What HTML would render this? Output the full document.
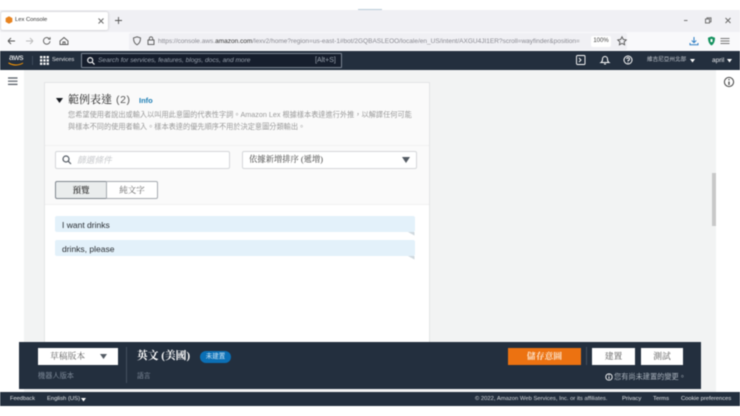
<!DOCTYPE html>
<html lang="zh-Hant">
<head>
<meta charset="utf-8">
<title>Lex Console</title>
<style>
html,body{margin:0;padding:0;width:740px;height:416px;overflow:hidden;background:#fff}
body{position:relative;font-family:"Liberation Sans","Noto Sans CJK TC",sans-serif;color:#16191f}
.a{position:absolute;box-sizing:border-box;white-space:nowrap}
svg{position:absolute;overflow:visible}
#w{position:absolute;left:0;top:0;width:740px;height:416px;filter:blur(.45px)}
</style>
</head>
<body>
<div id="w">
<!-- browser chrome -->
<div class="a" style="left:358px;top:9px;width:24px;height:1.5px;background:#b9ccd8"></div>
<div class="a" style="left:0;top:10px;width:740px;height:22px;background:#f0f0f4"></div>
<div class="a" style="left:1px;top:12px;width:107px;height:18px;background:#fff;border-radius:2px;box-shadow:0 0 2px rgba(0,0,0,.25)"></div>
<svg style="left:5px;top:16px" width="8" height="8" viewBox="0 0 10 10"><path d="M5 .3 9.200 2.600V7.400L5 9.700.8 7.400V2.600Z" fill="#e8831f"/></svg>
<div class="a" style="left:15px;top:15px;font-size:5.800px;line-height:11px;color:#333">Lex Console</div>
<svg style="left:98px;top:18px" width="6" height="6" fill="none" stroke="#666" stroke-width=".9"><path d="M.5.5 5.500 5.500M5.500.5.500 5.500"/></svg>
<svg style="left:115px;top:17px" width="7" height="7" fill="none" stroke="#555" stroke-width=".9"><path d="M3.500 0V7M0 3.500H7"/></svg>
<svg style="left:681px;top:17px" width="50" height="8" fill="none" stroke="#666" stroke-width=".9"><path d="M3 3.500H6.500"/><rect x="24.500" y="2" width="4" height="4"/><path d="M26 2V.8H30V4.800H28.500"/><path d="M44.500 1 49.500 6M49.500 1 44.500 6"/></svg>
<div class="a" style="left:0;top:32px;width:740px;height:19px;background:#f9f9fb"></div>
<svg style="left:7px;top:36px" width="60" height="11" fill="none" stroke="#555" stroke-width=".9"><path d="M1 5H8M1 5 4 2M1 5 4 8"/><path d="M19 5H26M26 5 23 2M26 5 23 8" stroke="#bbb"/><path d="M42 2.500A3.300 3.300 0 1 0 43 5.200M43.100 1.200V3.200H41.100"/><path d="M53 5 57 1.500 61 5V8.500H53Z"/><path d="M56 8.500V6H58V8.500"/></svg>
<div class="a" style="left:129px;top:33px;width:498px;height:17px;background:#f0f0f4;border-radius:2px"></div>
<svg style="left:133px;top:36px" width="24" height="10" fill="none" stroke="#555" stroke-width=".9"><path d="M4 .8 7.500 2C7.500 5 6.500 7.500 4 8.800 1.500 7.500.5 5 .5 2Z"/><rect x="15" y="4" width="6" height="4.500"/><path d="M16.300 4V2.500A1.700 1.700 0 0 1 19.700 2.500V4"/></svg>
<div class="a" style="left:158px;top:36px;width:431px;overflow:hidden;font-size:6.500px;line-height:11px;color:#8a8a92">https://console.aws.<span style="color:#333">amazon.com</span>/lexv2/home?region=us-east-1#bot/2GQBASLEOO/locale/en_US/intent/AXGU4JI1ER?scroll=wayfinder&amp;position=</div>
<div class="a" style="left:591px;top:36px;width:20px;height:11px;background:#fff;border-radius:2px;font-size:6px;line-height:11px;text-align:center;color:#444">100%</div>
<svg style="left:617px;top:36px" width="10" height="10" fill="none" stroke="#555" stroke-width=".9"><path d="M5 .8 6.300 3.500 9.200 3.900 7.100 5.900 7.600 8.800 5 7.400 2.400 8.800 2.900 5.900.8 3.900 3.700 3.500Z"/></svg>
<svg style="left:689px;top:36px" width="10" height="10" fill="none" stroke="#2f7fc4" stroke-width="1"><path d="M5 1V6.500M2.800 4.500 5 6.700 7.200 4.500M1 7V8.800H9V7"/></svg>
<svg style="left:707px;top:36px" width="9" height="10"><path d="M4.500.5 8 1.700C8 5 7 8 4.500 9.500 2 8 1 5 1 1.700Z" fill="#15925f"/><rect x="3.500" y="3" width="2" height="3" fill="#fff"/></svg>
<svg style="left:720px;top:37px" width="10" height="8" fill="none" stroke="#777" stroke-width=".9"><path d="M.5 1.500H9.500M.5 4H9.500M.5 6.500H9.500"/></svg>
<!-- aws nav -->
<div class="a" style="left:0;top:51px;width:740px;height:19px;background:#232f3e"></div>
<div class="a" style="left:9px;top:52px;font-size:8.500px;line-height:11px;color:#fff;letter-spacing:-.3px">aws</div>
<svg style="left:8px;top:62px" width="17" height="5" fill="none" stroke="#f90" stroke-width="1"><path d="M.5 .8C4.500 3.500 10.500 3.800 15 1"/></svg>
<div class="a" style="left:32px;top:56px;width:1px;height:9px;background:#3d4a5a"></div>
<svg style="left:40px;top:56px" width="9" height="9" fill="#fff"><path d="M0 0h2.300v2.300H0zM3.300 0h2.300v2.300H3.300zM6.600 0h2.300v2.300H6.600zM0 3.300h2.300v2.300H0zM3.300 3.300h2.300v2.300H3.300zM6.600 3.300h2.300v2.300H6.600zM0 6.600h2.300v2.300H0zM3.300 6.600h2.300v2.300H3.300zM6.600 6.600h2.300v2.300H6.600z"/></svg>
<div class="a" style="left:52px;top:55px;font-size:5.800px;line-height:11px;color:#e8eaed">Services</div>
<div class="a" style="left:81px;top:53px;width:261px;height:15px;background:#161e2d;border:1px solid #7b8594;border-radius:1px"></div>
<svg style="left:87px;top:57px" width="8" height="8" fill="none" stroke="#fff" stroke-width="1.100"><circle cx="3.200" cy="3.200" r="2.500"/><path d="M5 5 7.500 7.500"/></svg>
<div class="a" style="left:98px;top:55px;font-size:6.600px;line-height:11px;font-style:italic;color:#98a1ad">Search for services, features, blogs, docs, and more</div>
<div class="a" style="left:315px;top:55px;font-size:7px;line-height:11px;color:#98a1ad">[Alt+S]</div>
<svg style="left:576px;top:55px" width="10" height="11" fill="none" stroke="#fff" stroke-width=".9"><rect x=".5" y=".5" width="8.500" height="9" rx="1"/><path d="M3 3 5 5 3 7"/></svg>
<svg style="left:600px;top:55px" width="10" height="10" fill="none" stroke="#fff" stroke-width="1"><path d="M1 7.500C2.500 6.500 2.500 5 2.500 4A2.500 2.500 0 0 1 7.500 4C7.500 5 7.500 6.500 9 7.500Z"/><path d="M4 9H6"/></svg>
<svg style="left:623px;top:55px" width="10" height="10" fill="none" stroke="#fff" stroke-width="1"><circle cx="5" cy="5" r="4"/><path d="M3.700 3.900A1.400 1.400 0 1 1 5 5.500V6.300M5 7.100V7.900"/></svg>
<div class="a" style="left:647px;top:55px;font-size:5.600px;line-height:11px;color:#c5cad1">維吉尼亞州北部</div>
<svg style="left:690px;top:59px" width="5" height="4" fill="#fff"><path d="M0 0H5L2.500 3.500Z"/></svg>
<div class="a" style="left:712px;top:55px;font-size:6.500px;line-height:11px;color:#e8eaed">april</div>
<svg style="left:727px;top:59px" width="5" height="4" fill="#fff"><path d="M0 0H5L2.500 3.500Z"/></svg>
<!-- content -->
<div class="a" style="left:0;top:70px;width:740px;height:336px;background:#fff"></div>
<div class="a" style="left:24px;top:70px;width:692px;height:322px;background:#f2f3f3"></div>
<svg style="left:8px;top:77px" width="10" height="9" fill="none" stroke="#545b64" stroke-width="1.200"><path d="M0 1H9.500M0 4.200H9.500M0 7.400H9.500"/></svg>
<svg style="left:723px;top:76px" width="12" height="12" fill="none" stroke="#444" stroke-width="1"><circle cx="6" cy="6" r="4.600"/><path d="M6 5.500V9M6 3V4.200" stroke-width="1.300"/></svg>
<div class="a" style="left:712px;top:173px;width:4px;height:53px;background:#c8c8c8"></div>
<!-- card -->
<div class="a" style="left:44px;top:82px;width:386px;height:270px;background:#fff;border:1px solid #e4e5e6"></div>
<div class="a" style="left:45px;top:83px;width:384px;height:122px;background:#fafafa;border-bottom:1px solid #f0f0f0"></div>
<div class="a" style="left:45px;top:145px;width:384px;height:1px;background:#f1f1f1"></div>
<svg style="left:56px;top:98px" width="7" height="5" fill="#16191f"><path d="M0 0H7L3.500 5Z"/></svg>
<div class="a" style="left:68px;top:92px;font-size:11px;line-height:16px;font-family:'Liberation Serif','Noto Serif CJK SC',serif;color:#222">範例表達</div>
<div class="a" style="left:116px;top:92px;font-size:10.500px;line-height:16px;letter-spacing:.6px;color:#555">(2)</div>
<div class="a" style="left:139px;top:95px;font-size:7.500px;line-height:11px;font-weight:bold;color:#1f7fb5">Info</div>
<div class="a" style="left:68px;top:109px;font-size:7.200px;line-height:12px;color:#999">您希望使用者說出或輸入以叫用此意圖的代表性字詞。Amazon Lex 根據樣本表達進行外推，以解譯任何可能</div>
<div class="a" style="left:68px;top:121px;font-size:7.200px;line-height:12px;color:#999">與樣本不同的使用者輸入。樣本表達的優先順序不用於決定意圖分類輸出。</div>
<!-- filter -->
<div class="a" style="left:55px;top:151px;width:175px;height:18px;background:#fff;border:1px solid #d5d7da;border-radius:2px"></div>
<svg style="left:62px;top:155px" width="10" height="10" fill="none" stroke="#545b64" stroke-width="1.200"><circle cx="4" cy="4" r="3"/><path d="M6.200 6.200 9 9"/></svg>
<div class="a" style="left:77px;top:154px;font-size:8.700px;line-height:12px;font-style:italic;color:#c8cacd">篩選條件</div>
<div class="a" style="left:242px;top:151px;width:175px;height:18px;background:#fff;border:1px solid #d5d7da;border-radius:2px"></div>
<div class="a" style="left:249px;top:154px;font-size:8.300px;line-height:12px;font-family:'Liberation Serif','Noto Serif CJK SC',serif;color:#444">依據新增排序 (遞增)</div>
<svg style="left:402px;top:157px" width="8" height="6" fill="#545b64"><path d="M0 0H8L4 6Z"/></svg>
<div class="a" style="left:55px;top:181px;width:52px;height:18px;background:#eaeded;border:1px solid #7f868f;border-radius:2px 0 0 2px;font:bold 8.500px/16px 'Liberation Serif','Noto Serif CJK SC',serif;text-align:center;color:#444">預覽</div>
<div class="a" style="left:106px;top:181px;width:52px;height:18px;background:#fff;border:1px solid #a5aab0;border-radius:0 2px 2px 0;font:8.500px/16px 'Liberation Serif','Noto Serif CJK SC',serif;text-align:center;color:#666">純文字</div>
<!-- utterances -->
<div class="a" style="left:55px;top:216px;width:360px;height:16px;background:#e3f1fa;border-radius:2px;font-size:8.500px;line-height:18px;padding-left:7px;color:#2a2e33">I want drinks</div>
<svg style="left:408px;top:232px" width="7" height="4" fill="#cfd8de"><path d="M0 0H6.500V3.500Z"/></svg>
<div class="a" style="left:55px;top:240px;width:360px;height:16px;background:#e3f1fa;border-radius:2px;font-size:8.500px;line-height:18px;padding-left:7px;color:#2a2e33">drinks, please</div>
<svg style="left:408px;top:256px" width="7" height="4" fill="#cfd8de"><path d="M0 0H6.500V3.500Z"/></svg>
<!-- bottom bar -->
<div class="a" style="left:19px;top:342px;width:682px;height:47px;background:#232f3e"></div>
<div class="a" style="left:38px;top:348px;width:80px;height:17px;background:#fff;font:8.800px/17px 'Liberation Serif','Noto Serif CJK SC',serif;padding-left:12px;color:#666">草稿版本</div>
<svg style="left:100px;top:354px" width="7" height="5" fill="#545b64"><path d="M0 0H7L3.500 5Z"/></svg>
<div class="a" style="left:38px;top:370px;font-size:7.200px;line-height:11px;color:#7d8998">機器人版本</div>
<div class="a" style="left:126px;top:347px;width:1px;height:36px;background:#44505f"></div>
<div class="a" style="left:137px;top:348px;font:bold 10.800px/16px 'Liberation Serif','Noto Serif CJK SC',serif;color:#fff">英文 (美國)</div>
<div class="a" style="left:200px;top:351px;width:31px;height:12px;background:#0b6fb5;border-radius:6px;font-size:6.500px;line-height:12px;text-align:center;color:#cde6f7">未建置</div>
<div class="a" style="left:137px;top:371px;font-size:6.800px;line-height:11px;color:#7d8998">語言</div>
<div class="a" style="left:508px;top:348px;width:73px;height:17px;background:#ec7211;font:bold 8.800px/17px 'Liberation Serif','Noto Serif CJK SC',serif;text-align:center;color:#fde4cc">儲存意圖</div>
<div class="a" style="left:586px;top:347px;width:1px;height:18px;background:#44505f"></div>
<div class="a" style="left:592px;top:348px;width:43px;height:17px;background:#fff;font:8.800px/17px 'Liberation Serif','Noto Serif CJK SC',serif;text-align:center;color:#555">建置</div>
<div class="a" style="left:641px;top:348px;width:42px;height:17px;background:#fff;font:8.800px/17px 'Liberation Serif','Noto Serif CJK SC',serif;text-align:center;color:#555">測試</div>
<svg style="left:605px;top:373px" width="8" height="8" fill="none" stroke="#fff" stroke-width=".9"><circle cx="4" cy="4" r="3.200"/><path d="M4 3.500V6M4 1.800V2.800"/></svg>
<div class="a" style="left:614px;top:371px;font-size:7.200px;line-height:11px;color:#aab3bd">您有尚未建置的變更。</div>
<!-- footer -->
<div class="a" style="left:0;top:392px;width:740px;height:14px;background:#232f3e"></div>
<div class="a" style="left:10px;top:394px;font-size:5.700px;line-height:11px;color:#e3e6e9">Feedback</div>
<div class="a" style="left:47px;top:394px;font-size:5.900px;line-height:11px;color:#e3e6e9">English (US)</div>
<svg style="left:81px;top:398px" width="5" height="4" fill="#fff"><path d="M0 0H5L2.500 3.500Z"/></svg>
<div class="a" style="left:475px;top:394px;font-size:5.850px;line-height:11px;color:#d5d9dd">© 2022, Amazon Web Services, Inc. or its affiliates.</div>
<div class="a" style="left:622px;top:394px;font-size:5.900px;line-height:11px;color:#e3e6e9">Privacy</div>
<div class="a" style="left:653px;top:394px;font-size:5.900px;line-height:11px;color:#e3e6e9">Terms</div>
<div class="a" style="left:681px;top:394px;font-size:5.800px;line-height:11px;color:#e3e6e9">Cookie preferences</div>
</div>
</body>
</html>
